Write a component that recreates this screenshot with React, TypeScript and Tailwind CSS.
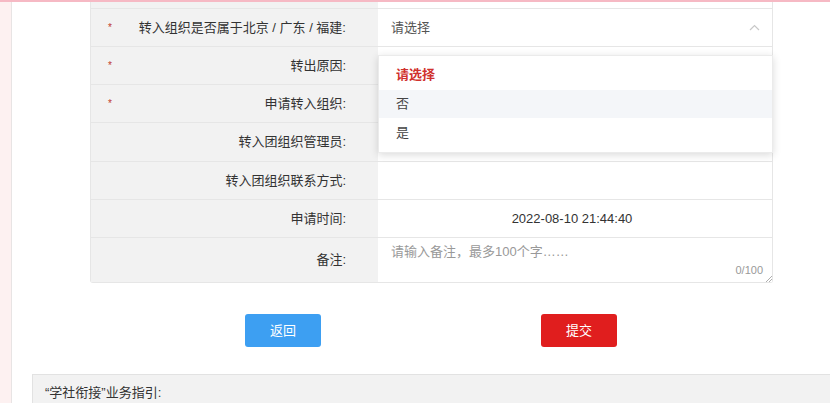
import React from 'react';

type Row = { label: string; required?: boolean; h: string };

const App: React.FC = () => {
  const rows: Row[] = [
    { label: '转入组织是否属于北京 / 广东 / 福建:', required: true, h: 'h-[38px]' },
    { label: '转出原因:', required: true, h: 'h-[38px]' },
    { label: '申请转入组织:', required: true, h: 'h-[38px]' },
    { label: '转入团组织管理员:', h: 'h-[39px]' },
    { label: '转入团组织联系方式:', h: 'h-[38px]' },
    { label: '申请时间:', h: 'h-[38px]' },
  ];

  return (
    <div
      className="w-[830px] h-[403px] overflow-hidden bg-white border-t-2 border-[#f6b9c4] flex text-[13px] text-[#333]"
      style={{ fontFamily: '"Liberation Sans", "Noto Sans CJK SC", sans-serif' }}
    >
      <div className="w-[12px] shrink-0 bg-[#fdf1f1] border-r border-[#e8e4e4]" />
      <div className="flex-1 flex flex-col">
        {/* form table */}
        <div className="ml-[78px] w-[683px] border-x border-b border-[#e6e6e6] rounded-b-[3px]">
          <div className="h-[6px] grid grid-cols-[287px_1fr]">
            <div className="bg-[#f2f2f2]" />
            <div className="bg-white" />
          </div>
          {rows.map((r, i) => (
            <div key={i} className={`grid grid-cols-[287px_1fr] ${r.h} border-t border-[#e6e6e6]`}>
              <div className="bg-[#f2f2f2] flex items-center pl-[17px] pr-[32px]">
                <span className="w-[10px] text-[#c0392b] text-[10px]">{r.required ? '*' : ''}</span>
                <span className="flex-1 text-right">{r.label}</span>
              </div>
              <div className="relative bg-white flex items-center">
                {i === 0 && (
                  <>
                    <div className="flex-1 flex items-center justify-between pl-[13px] pr-[12px] text-[#555]">
                      <span>请选择</span>
                      <svg width="11" height="7" viewBox="0 0 11 7" fill="none" stroke="#c8c8c8" strokeWidth="1.2">
                        <path d="M1 6 L5.5 1.5 L10 6" />
                      </svg>
                    </div>
                    <div className="absolute left-0 top-[46px] w-[395px] z-10 bg-white shadow-[0_2px_8px_rgba(0,0,0,0.15)] border border-[#ebebeb] py-[4px]">
                      <div className="h-[30px] flex items-center pl-[17px] text-[#d0312d] font-bold">请选择</div>
                      <div className="h-[28px] flex items-center pl-[17px] bg-[#f4f6f9] text-[#444]">否</div>
                      <div className="h-[30px] flex items-center pl-[17px] text-[#444]">是</div>
                    </div>
                  </>
                )}
                {i === 5 && <div className="flex-1 text-center text-[#333] pr-[6px]">2022-08-10 21:44:40</div>}
              </div>
            </div>
          ))}
          <div className="grid grid-cols-[287px_1fr] h-[45px] border-t border-[#e6e6e6]">
            <div className="bg-[#f2f2f2] flex items-center justify-end pr-[32px]">备注:</div>
            <div className="relative bg-white">
              <div className="pl-[13px] pt-[4px] text-[#999]">请输入备注，最多100个字……</div>
              <div className="absolute right-[9px] bottom-[4px] text-[11px] text-[#999]">0/100</div>
              <svg className="absolute right-0 bottom-0" width="7" height="7" viewBox="0 0 7 7" stroke="#999" strokeWidth="0.8">
                <path d="M1 7 L7 1 M4 7 L7 4" />
              </svg>
            </div>
          </div>
        </div>

        {/* buttons */}
        <div className="flex mt-[31px] pl-[233px] gap-[220px]">
          <button className="w-[76px] h-[33px] rounded-[3px] bg-[#3d9ff2] text-white text-[13px]">返回</button>
          <button className="w-[76px] h-[33px] rounded-[3px] bg-[#e01e1e] text-white text-[13px]">提交</button>
        </div>

        {/* guide bar */}
        <div className="mt-[27px] ml-[20px] flex-1 bg-[#f2f2f2] border-t border-l border-[#e2e2e2] flex items-start pl-[12px] pt-[8px] text-[#333]">
          “学社衔接”业务指引:
        </div>
      </div>
    </div>
  );
};

export default App;
